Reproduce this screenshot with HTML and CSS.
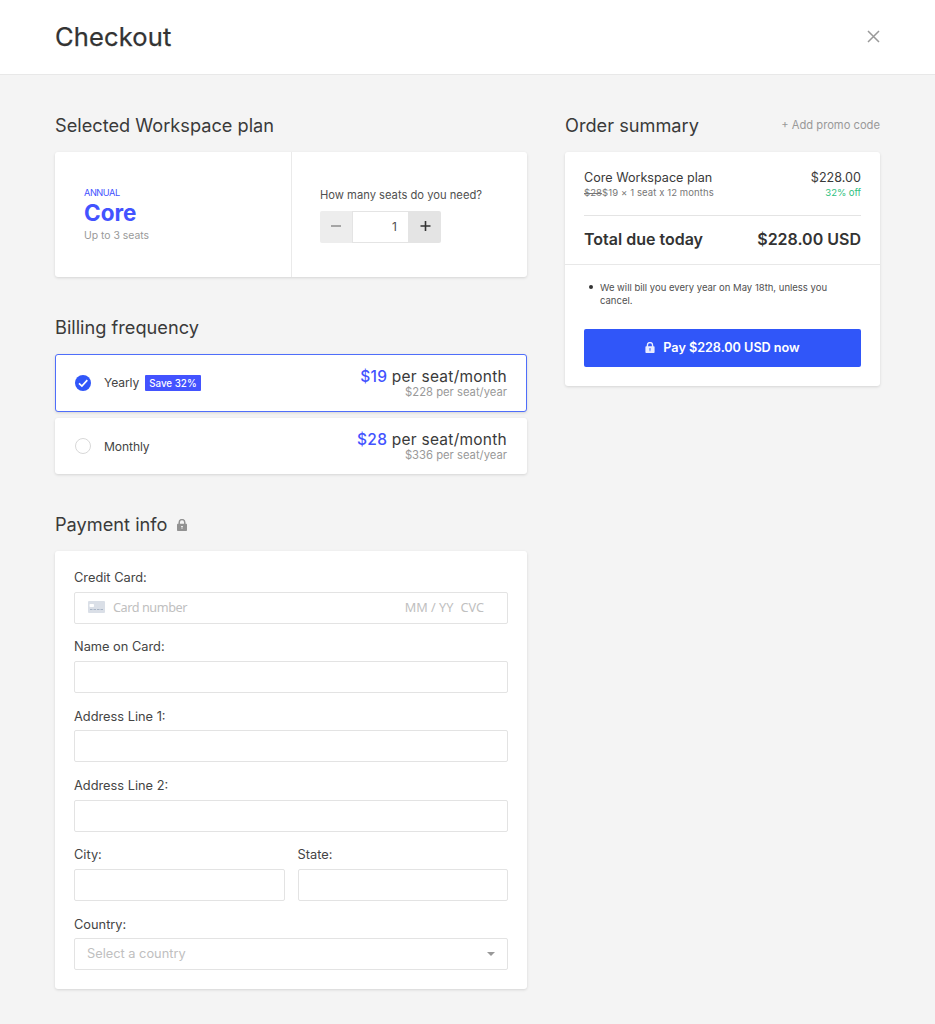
FILE: index.html
```html
<!DOCTYPE html>
<html lang="en">
<head>
<meta charset="utf-8">
<title>Checkout</title>
<link rel="stylesheet" href="styles.css">
</head>
<body>
<header class="topbar">
  <h1>Checkout</h1>
  <button class="close" aria-label="Close"><svg width="13" height="13" viewBox="0 0 13 13"><path d="M1 1L12 12M12 1L1 12" stroke="#999" stroke-width="1.5" fill="none"/></svg></button>
</header>
<main class="columns">
  <div class="left">
    <section>
      <h2>Selected Workspace plan</h2>
      <div class="card plan">
        <div class="plan-half">
          <div class="plan-term">ANNUAL</div>
          <div class="plan-name">Core</div>
          <div class="plan-limit">Up to 3 seats</div>
        </div>
        <div class="plan-half seats">
          <div class="seats-label">How many seats do you need?</div>
          <div class="stepper">
            <button class="step minus" aria-label="Remove seat"><svg width="12" height="12" viewBox="0 0 12 12"><path d="M1 5H11" stroke="#8c8c8c" stroke-width="1.500"/></svg></button>
            <div class="count">1</div>
            <button class="step plus" aria-label="Add seat"><svg width="12" height="12" viewBox="0 0 12 12"><path d="M1.500 5H11.500M6.500 0V10" stroke="#333" stroke-width="1.600"/></svg></button>
          </div>
        </div>
      </div>
    </section>
    <section class="billing">
      <h2>Billing frequency</h2>
      <div class="card option selected">
        <svg class="radio" width="16" height="16" viewBox="0 0 16 16"><circle cx="8" cy="8" r="8" fill="#3056f9"/><path d="M4 8.3L6.9 11L12.3 5.2" fill="none" stroke="#fff" stroke-width="1.7"/></svg>
        <span class="option-name">Yearly</span>
        <span class="badge">Save 32%</span>
        <div class="price"><div class="price-month"><b>$19</b> per seat/month</div><div class="price-year">$228 per seat/year</div></div>
      </div>
      <div class="card option">
        <svg class="radio" width="16" height="16" viewBox="0 0 16 16"><circle cx="8" cy="8" r="7.5" fill="#fff" stroke="#d8d8d8"/></svg>
        <span class="option-name">Monthly</span>
        <div class="price"><div class="price-month"><b>$28</b> per seat/month</div><div class="price-year">$336 per seat/year</div></div>
      </div>
    </section>
    <section class="payment">
      <h2>Payment info <svg class="lock" width="10" height="12" viewBox="0 0 10 12"><path d="M2.2 5.5V3.4a2.8 2.8 0 0 1 5.6 0V5.5" fill="none" stroke="#929292" stroke-width="1.5"/><rect y="4.7" width="10" height="7.3" rx=".8" fill="#929292"/><path d="M4 7h2v1H5.4v2H4.6V8H4z" fill="#e8e8e8"/></svg></h2>
      <form class="card form">
        <label>Credit Card:</label>
        <div class="field card-field">
          <svg width="17" height="12" viewBox="0 0 17 12"><rect width="17" height="12" rx="1" fill="#dadfe7"/><rect x="1.500" y="3" width="4.500" height="3" rx=".8" fill="#fff"/><path d="M2 8.500h13.500" stroke="#a9b5c6" stroke-dasharray="2.500 1"/></svg>
          <span class="card-number">Card number</span><span class="expiry">MM / YY</span><span class="cvc">CVC</span>
        </div>
        <label>Name on Card:</label>
        <div class="field"></div>
        <label>Address Line 1:</label>
        <div class="field"></div>
        <label>Address Line 2:</label>
        <div class="field"></div>
        <div class="pair">
          <div><label>City:</label><div class="field"></div></div>
          <div><label>State:</label><div class="field"></div></div>
        </div>
        <label>Country:</label>
        <div class="field select"><span>Select a country</span><svg width="8" height="4" viewBox="0 0 8 4"><path d="M0 0H8L4 4Z" fill="#999"/></svg></div>
      </form>
    </section>
  </div>
  <aside class="right">
    <div class="summary-head"><h2>Order summary</h2><a class="promo">+ Add promo code</a></div>
    <div class="card summary">
      <div class="line-items">
        <div class="item"><span>Core Workspace plan</span><span class="cost">$228.00</span></div>
        <div class="detail"><span class="calc"><s>$28</s>$19 × 1 seat x 12 months</span><span class="off">32% off</span></div>
      </div>
      <div class="total"><span>Total due today</span><span class="amount">$228.00 USD</span></div>
      <div class="actions">
        <ul><li>We will bill you every year on May 18th, unless you cancel.</li></ul>
        <button class="pay"><svg width="10" height="11" viewBox="0 0 10 12"><path d="M2.200 5.500V3.400a2.800 2.800 0 0 1 5.600 0V5.500" fill="none" stroke="#e8ecff" stroke-width="1.500"/><rect y="4.700" width="10" height="7.300" rx=".8" fill="#e8ecff"/><path d="M4 7h2v1H5.400v2H4.600V8H4z" fill="#3056f9"/></svg><span>Pay $228.00 USD now</span></button>
      </div>
    </div>
  </aside>
</main>
</body>
</html>
```

FILE: styles.css
```css
* { box-sizing: border-box; }
body { margin: 0; min-height: 1024px; background: #f4f4f4; color: #3a3a3a; font-family: Inter, sans-serif; }
h1, h2 { margin: 0; }
button { border: 0; padding: 0; background: none; font-family: inherit; }
svg { display: block; flex: none; }
.topbar { height: 75px; padding: 0 55px; display: flex; align-items: center; justify-content: space-between; background: #fff; border-bottom: 1px solid #e8e8e8; }
h1 { color: #333; font-size: 25.500px; font-weight: 400; line-height: 32px; letter-spacing: .15px; -webkit-text-stroke: .25px #333; }
.close { margin-top: -2px; }
.columns { padding: 38px 55px 34px; display: grid; grid-template-columns: 472px 315px; column-gap: 38px; align-items: start; }
h2 { font-size: 18.200px; font-weight: 400; line-height: 24px; margin-bottom: 15px; white-space: nowrap; }
.card { background: #fff; border-radius: 3px; box-shadow: 0 1px 3px rgba(0,0,0,.13); }
.plan { display: grid; grid-template-columns: 1fr 1fr; height: 125px; }
.plan-half { padding: 34px 28px 0 29px; }
.plan-term { color: #4353ff; font-size: 9.200px; line-height: 13px; letter-spacing: -.45px; }
.plan-name { margin-top: -1px; color: #4353ff; font-size: 22.500px; font-weight: 700; line-height: 29px; }
.plan-limit { margin-top: 2px; color: #999; font-size: 10.400px; line-height: 14px; }
.seats { border-left: 1px solid #eaeaea; padding-left: 28px; }
.seats-label { color: #505050; font-size: 11.200px; line-height: 18px; white-space: nowrap; }
.stepper { display: flex; height: 32px; margin-top: 7px; }
.step { width: 32px; display: grid; place-items: center; background: #ededed; border-radius: 2px 0 0 2px; }
.plus { background: #e4e4e4; border-radius: 0 2px 2px 0; }
.count { width: 57px; border: 1px solid #e4e4e4; padding-right: 11px; text-align: right; font-size: 12px; line-height: 29px; color: #505050; }
.billing { margin-top: 38px; }
.option { height: 56px; display: flex; align-items: center; padding: 0 20px; margin-bottom: 6px; }
.selected { height: 58px; border: 1px solid #4f6efa; padding: 0 19px 1px; }
.option-name { margin-left: 13px; font-size: 12.100px; letter-spacing: -.1px; color: #444; }
.badge { margin-left: 6px; padding: 0 4px; height: 16px; line-height: 17px; border-radius: 1px; background: #4353ff; color: #fff; font-size: 9.800px; font-weight: 500; }
.price { margin-left: auto; text-align: right; white-space: nowrap; }
.price-month { font-size: 15.500px; font-weight: 400; line-height: 19px; letter-spacing: .25px; }
.price-month b { font-weight: 500; color: #4353ff; }
.price-year { margin-top: -1px; font-size: 11.250px; line-height: 14px; color: #999; }
.payment { margin-top: 38px; }
.payment h2 { display: flex; align-items: center; gap: 9px; }
.lock { margin: 2px 0 0 1px; }
.form { height: 438px; padding: 18px 19px 0; }
.form label { display: block; height: 22.500px; font-size: 12.800px; line-height: 17px; color: #444; }
.field { height: 32px; margin-bottom: 14.850px; border: 1px solid #e3e3e3; border-radius: 2px; background: #fff; }
.card-field { display: flex; align-items: center; padding: 0 23px 1px 13px; font: 12.700px "Noto Sans", sans-serif; color: #c0c0c0; }
.card-number { margin-left: 8px; letter-spacing: -.45px; }
.expiry { margin-left: auto; }
.cvc { margin-left: 7px; }
.pair { display: grid; grid-template-columns: 1fr 1fr; gap: 13px; }
.select { display: flex; justify-content: space-between; align-items: center; padding: 0 12px; font-size: 12.800px; color: #c0c0c0; }
.select span { margin-top: -2px; }
.summary-head { display: flex; justify-content: space-between; }
.promo { color: #999; font-size: 11.200px; line-height: 25px; }
.summary { height: 234px; }
.line-items { margin: 0 19px; padding-top: 17px; height: 64px; border-bottom: 1px solid #e4e4e4; }
.item, .detail, .total { display: flex; justify-content: space-between; white-space: nowrap; }
.item { font-size: 12.600px; font-weight: 400; line-height: 17px; }
.detail { font-size: 9.500px; line-height: 14px; letter-spacing: .1px; }
.calc { color: #777; }
.off { color: #2fbf80; letter-spacing: -.05px; }
.total { height: 49px; padding: 0 19px 2px; align-items: center; border-bottom: 1px solid #e8e8e8; color: #333; font-size: 16px; font-weight: 600; }
.actions { padding: 16px 19px 0; }
ul { margin: 0 0 22px; padding-left: 16px; font-size: 9.500px; line-height: 13px; color: #505050; list-style: none; }
li::before { content: ""; float: left; width: 4px; height: 4px; margin: 4px 0 0 -11px; border-radius: 50%; background: #333; }
.pay { width: 100%; height: 38px; padding-bottom: 2px; display: flex; align-items: center; justify-content: center; gap: 8px; border-radius: 2px; background: #3056f9; color: #fff; font-size: 12.700px; font-weight: 600; letter-spacing: -.05px; }
```
